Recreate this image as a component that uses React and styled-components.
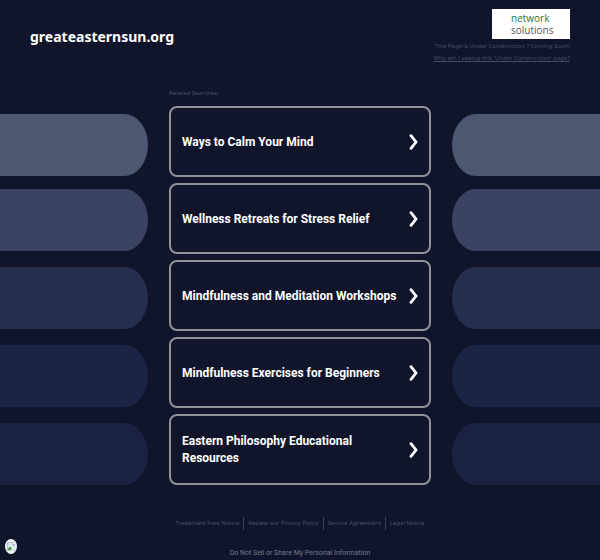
import React from 'react';
import styled, { createGlobalStyle } from 'styled-components';

const GlobalStyle = createGlobalStyle`
    * {
        box-sizing: border-box;
    }

    body {
        margin: 0;
        background: #10152b;
        color: #fff;
        font-family: Roboto, 'Liberation Sans', Arial, sans-serif;
    }
`;

const Page = styled.div`
    position: relative;
    min-height: 100vh;
    overflow: hidden;
`;

const Header = styled.header`
    display: flex;
    justify-content: space-between;
    align-items: flex-start;
    height: 86px;
    padding: 9px 30px 0;
`;

const Domain = styled.h1`
    margin: 16px 0 0;
    font-family: 'Noto Sans', 'Open Sans', sans-serif;
    font-size: 14px;
    font-weight: 700;
    line-height: 24px;
`;

const Notice = styled.div`
    display: flex;
    flex-direction: column;
    align-items: flex-end;
    color: #4a4e61;
    font-family: 'Noto Sans', 'Open Sans', sans-serif;
    font-size: 6px;
    line-height: 12px;

    a {
        color: inherit;
    }
`;

const Logo = styled.div`
    width: 78px;
    height: 30px;
    margin-bottom: 1px;
    padding: 3px 0 0 19px;
    background: #fff;
    color: #55585a;
    font-family: 'Open Sans', sans-serif;
    font-size: 10px;
    line-height: 12px;

    span {
        display: block;
    }

    .network {
        color: #27763f;
    }
`;

const Columns = styled.main`
    display: grid;
    grid-template-columns: 1fr 262px 1fr;
    column-gap: 21px;
`;

const Bars = styled.div`
    padding-top: 28px;
`;

const Bar = styled.div`
    height: 62px;
    margin-bottom: 16px;
    background: ${(props) => props.$color};
    border-radius: ${(props) =>
        props.$side === 'left' ? '0 24px 24px 0 / 0 31px 31px 0' : '24px 0 0 24px / 31px 0 0 31px'};

    &:first-child {
        margin-bottom: 13px;
    }

    &:last-child {
        margin-bottom: 0;
    }
`;

const Label = styled.h2`
    margin: 0 0 6px;
    color: #4a4e61;
    font-family: 'Noto Sans', 'Open Sans', sans-serif;
    font-size: 6px;
    font-weight: 400;
    line-height: 14px;
`;

const SearchList = styled.nav`
    display: flex;
    flex-direction: column;
    gap: 6px;
`;

const SearchLink = styled.a`
    display: flex;
    justify-content: space-between;
    align-items: center;
    height: 71px;
    padding: 1px 11px 0;
    border: 2px solid #8f9296;
    border-radius: 8px;
    color: #fff;
    font-size: 12px;
    font-weight: 700;
    line-height: 17px;
    text-decoration: none;

    span {
        max-width: 220px;
    }
`;

const Footer = styled.footer`
    display: flex;
    flex-direction: column;
    align-items: center;
    padding: 32px 0 0;
`;

const FooterLinks = styled.nav`
    display: flex;
    margin-bottom: 17px;
    font-family: 'Noto Sans', 'Open Sans', sans-serif;
    font-size: 6px;
    line-height: 13px;

    a {
        padding: 0 4px;
        color: #4a5265;
        text-decoration: none;
    }

    a + a {
        border-left: 1px solid #3c4456;
    }
`;

const PrivacyLink = styled.a`
    color: #777b88;
    font-size: 7px;
    line-height: 12px;
    text-decoration: none;
`;

const CookieButton = styled.button`
    position: absolute;
    bottom: 6px;
    left: 5px;
    display: flex;
    justify-content: center;
    align-items: center;
    width: 12px;
    height: 15px;
    padding: 0;
    border: 0;
    border-radius: 50%;
    background: #eef2f6;
`;

const barColors = ['#4e5772', '#3c4361', '#272f4e', '#1b2442', '#1a2240'];

const searches = [
    'Ways to Calm Your Mind',
    'Wellness Retreats for Stress Relief',
    'Mindfulness and Meditation Workshops',
    'Mindfulness Exercises for Beginners',
    'Eastern Philosophy Educational Resources',
];

const footerLinks = [
    'Trademark Free Notice',
    'Review our Privacy Policy',
    'Service Agreement',
    'Legal Notice',
];

const Chevron = () => (
    <svg width='9' height='16' viewBox='0 0 9 16' fill='none' aria-hidden='true'>
        <path
            d='M2 1.7 L7 8 L2 14.3'
            stroke='#fff'
            strokeWidth='2.8'
            strokeLinecap='round'
            strokeLinejoin='miter'
        />
    </svg>
);

const BarColumn = ({ side }) => (
    <Bars aria-hidden='true'>
        {barColors.map((color) => (
            <Bar key={color} $color={color} $side={side} />
        ))}
    </Bars>
);

const App = () => {
    return (
        <Page>
            <GlobalStyle />
            <Header>
                <Domain>greateasternsun.org</Domain>
                <Notice>
                    <Logo>
                        <span className='network'>network</span>
                        <span>solutions</span>
                    </Logo>
                    <div>This Page is Under Construction ? Coming Soon!</div>
                    <a href='#why'>Why am I seeing this 'Under Construction' page?</a>
                </Notice>
            </Header>
            <Columns>
                <BarColumn side='left' />
                <div>
                    <Label>Related Searches:</Label>
                    <SearchList>
                        {searches.map((search) => (
                            <SearchLink key={search} href='#search'>
                                <span>{search}</span>
                                <Chevron />
                            </SearchLink>
                        ))}
                    </SearchList>
                </div>
                <BarColumn side='right' />
            </Columns>
            <Footer>
                <FooterLinks>
                    {footerLinks.map((link) => (
                        <a key={link} href='#legal'>
                            {link}
                        </a>
                    ))}
                </FooterLinks>
                <PrivacyLink href='#privacy'>
                    Do Not Sell or Share My Personal Information
                </PrivacyLink>
            </Footer>
            <CookieButton aria-label='Cookie settings'>
                <svg width='8' height='9' viewBox='0 0 8 9' aria-hidden='true'>
                    <path d='M0.5 0.5 H5.5 L7.5 2.5 V8.5 H0.5 Z' fill='#dce7f5' stroke='#a4abb2' strokeWidth='0.7' />
                    <path d='M5.5 0.5 V2.5 H7.5' fill='#fff' stroke='#a4abb2' strokeWidth='0.7' />
                    <path d='M1 8 V6.5 L3 4.5 L5 6.5 L3.5 8 Z' fill='#4fa145' />
                    <path d='M4 9 L8 4.5 V6 L5.4 9 Z' fill='#fff' />
                </svg>
            </CookieButton>
        </Page>
    );
};

export default App;
